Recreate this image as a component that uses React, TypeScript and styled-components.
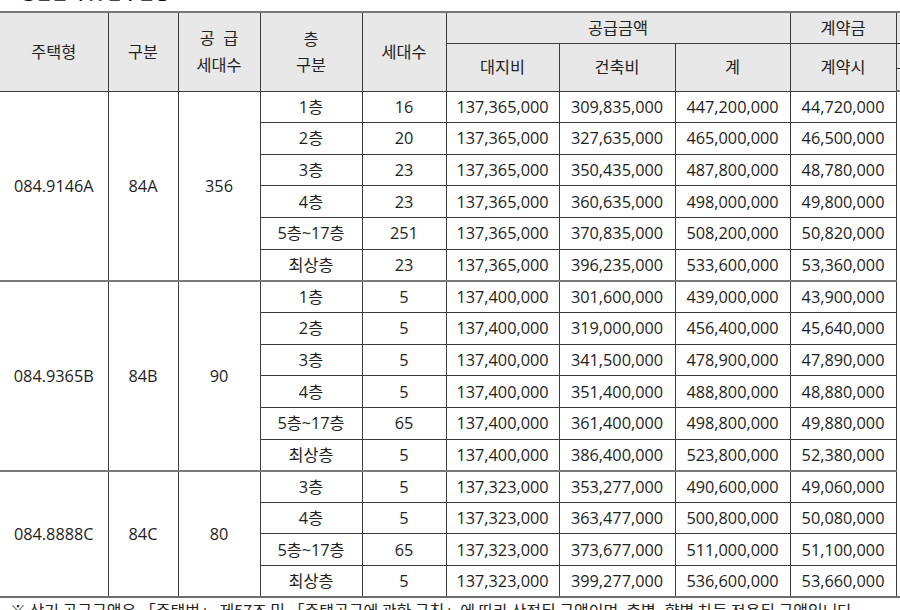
import React from "react";
import styled, { createGlobalStyle } from "styled-components";

const Global = createGlobalStyle`
  html, body { margin: 0; padding: 0; background: #ffffff; }
  body { font-family: "Open Sans", "Noto Sans CJK KR", sans-serif; color: #1e1e1e; }
`;

const Page = styled.div`
  width: 900px;
  height: 610px;
  overflow: hidden;
  background: #ffffff;
`;

const Title = styled.div`
  height: 11px;
  overflow: hidden;
`;

const TitleText = styled.div`
  margin-top: -18px;
  line-height: 20px;
  font-size: 17px;
  font-weight: 700;
  white-space: nowrap;
  color: #111;
  font-family: "Noto Sans CJK KR", sans-serif;
`;

const Table = styled.table`
  border-collapse: collapse;
  table-layout: fixed;
  width: 960px;
  border-top: 2px solid #777;
  border-bottom: 2px solid #6e6e6e;
  font-size: 16.3px;
`;

const HeadCell = styled.th<{ $noLeft?: boolean; $lineH?: number }>`
  background: #e8e8e8;
  font-weight: 400;
  color: #222;
  text-align: center;
  vertical-align: middle;
  padding: 0;
  border: 1px solid #3c3c3c;
  border-left: ${(p) => (p.$noLeft ? "none" : "1px solid #3c3c3c")};
  line-height: ${(p) => p.$lineH ?? 20}px;
  white-space: nowrap;
`;

const HeadRow = styled.tr<{ $h: number; $last?: boolean }>`
  height: ${(p) => p.$h}px;
  & > th { ${(p) => (p.$last ? "border-bottom: 2px solid #6e6e6e;" : "")} }
`;

const Row = styled.tr<{ $groupEnd?: boolean }>`
  height: 31.65px;
  & > td { ${(p) => (p.$groupEnd ? "border-bottom: 2px solid #7a7a7a;" : "")} }
`;

const Cell = styled.td<{ $noLeft?: boolean; $blank?: boolean; $groupEnd?: boolean }>`
  padding: 0;
  text-align: center;
  vertical-align: middle;
  white-space: nowrap;
  line-height: 20px;
  color: #1e1e1e;
  border: 1px solid #3c3c3c;
  border-left: ${(p) => (p.$noLeft ? "none" : "1px solid #3c3c3c")};
  ${(p) => (p.$groupEnd ? "border-bottom: 2px solid #7a7a7a;" : "")}
  ${(p) => (p.$blank ? "border-top: none; border-bottom: none;" : "")}
`;

const Note = styled.div`
  margin-top: 2px;
  padding-left: 10px;
  line-height: 20px;
  font-size: 16px;
  white-space: nowrap;
  color: #222;
  font-family: "Noto Sans CJK KR", sans-serif;
`;

type Line = [string, string, string, string, string, string];
type Group = { type: string; kind: string; total: string; rows: Line[] };

const groups: Group[] = [
  {
    type: "084.9146A",
    kind: "84A",
    total: "356",
    rows: [
      ["1층", "16", "137,365,000", "309,835,000", "447,200,000", "44,720,000"],
      ["2층", "20", "137,365,000", "327,635,000", "465,000,000", "46,500,000"],
      ["3층", "23", "137,365,000", "350,435,000", "487,800,000", "48,780,000"],
      ["4층", "23", "137,365,000", "360,635,000", "498,000,000", "49,800,000"],
      ["5층~17층", "251", "137,365,000", "370,835,000", "508,200,000", "50,820,000"],
      ["최상층", "23", "137,365,000", "396,235,000", "533,600,000", "53,360,000"],
    ],
  },
  {
    type: "084.9365B",
    kind: "84B",
    total: "90",
    rows: [
      ["1층", "5", "137,400,000", "301,600,000", "439,000,000", "43,900,000"],
      ["2층", "5", "137,400,000", "319,000,000", "456,400,000", "45,640,000"],
      ["3층", "5", "137,400,000", "341,500,000", "478,900,000", "47,890,000"],
      ["4층", "5", "137,400,000", "351,400,000", "488,800,000", "48,880,000"],
      ["5층~17층", "65", "137,400,000", "361,400,000", "498,800,000", "49,880,000"],
      ["최상층", "5", "137,400,000", "386,400,000", "523,800,000", "52,380,000"],
    ],
  },
  {
    type: "084.8888C",
    kind: "84C",
    total: "80",
    rows: [
      ["3층", "5", "137,323,000", "353,277,000", "490,600,000", "49,060,000"],
      ["4층", "5", "137,323,000", "363,477,000", "500,800,000", "50,080,000"],
      ["5층~17층", "65", "137,323,000", "373,677,000", "511,000,000", "51,100,000"],
      ["최상층", "5", "137,323,000", "399,277,000", "536,600,000", "53,660,000"],
    ],
  },
];

const widths = [108, 70, 82, 102, 84, 113, 116, 115, 106, 64];
const totalRows = groups.reduce((n, g) => n + g.rows.length, 0);

export default function App() {
  let first = true;
  return (
    <Page>
      <Global />
      <Title>
        <TitleText>■ 공급금액 및 납부일정</TitleText>
      </Title>
      <Table>
        <colgroup>
          {widths.map((w, i) => (
            <col key={i} style={{ width: w }} />
          ))}
        </colgroup>
        <thead>
          <HeadRow $h={31}>
            <HeadCell rowSpan={3} $noLeft>주택형</HeadCell>
            <HeadCell rowSpan={3}>구분</HeadCell>
            <HeadCell rowSpan={3} $lineH={27}>
              공&nbsp;&nbsp;급
              <br />
              세대수
            </HeadCell>
            <HeadCell rowSpan={3} $lineH={26}>
              층
              <br />
              구분
            </HeadCell>
            <HeadCell rowSpan={3}>세대수</HeadCell>
            <HeadCell colSpan={3}>공급금액</HeadCell>
            <HeadCell>계약금</HeadCell>
            <HeadCell />
          </HeadRow>
          <HeadRow $h={25}>
            <HeadCell rowSpan={2}>대지비</HeadCell>
            <HeadCell rowSpan={2}>건축비</HeadCell>
            <HeadCell rowSpan={2}>계</HeadCell>
            <HeadCell rowSpan={2}>계약시</HeadCell>
            <HeadCell />
          </HeadRow>
          <HeadRow $h={23} $last>
            <HeadCell />
          </HeadRow>
        </thead>
        <tbody>
          {groups.map((g, gi) =>
            g.rows.map((r, ri) => {
              const isFirst = ri === 0;
              const groupEnd = ri === g.rows.length - 1 && gi < groups.length - 1;
              const showBlank = first;
              first = false;
              return (
                <Row key={`${gi}-${ri}`} $groupEnd={groupEnd}>
                  {isFirst && (
                    <>
                      <Cell rowSpan={g.rows.length} $noLeft $groupEnd={gi < groups.length - 1}>
                        {g.type}
                      </Cell>
                      <Cell rowSpan={g.rows.length} $groupEnd={gi < groups.length - 1}>
                        {g.kind}
                      </Cell>
                      <Cell rowSpan={g.rows.length} $groupEnd={gi < groups.length - 1}>
                        {g.total}
                      </Cell>
                    </>
                  )}
                  {r.map((v, vi) => (
                    <Cell key={vi}>{v}</Cell>
                  ))}
                  {showBlank && <Cell rowSpan={totalRows} $blank />}
                </Row>
              );
            })
          )}
        </tbody>
      </Table>
      <Note>
        ※ 상기 공급금액은 「주택법」 제57조 및 「주택공급에 관한 규칙」에 따라 산정된 금액이며, 층별·향별 차등 적용된 금액입니다.
      </Note>
    </Page>
  );
}
